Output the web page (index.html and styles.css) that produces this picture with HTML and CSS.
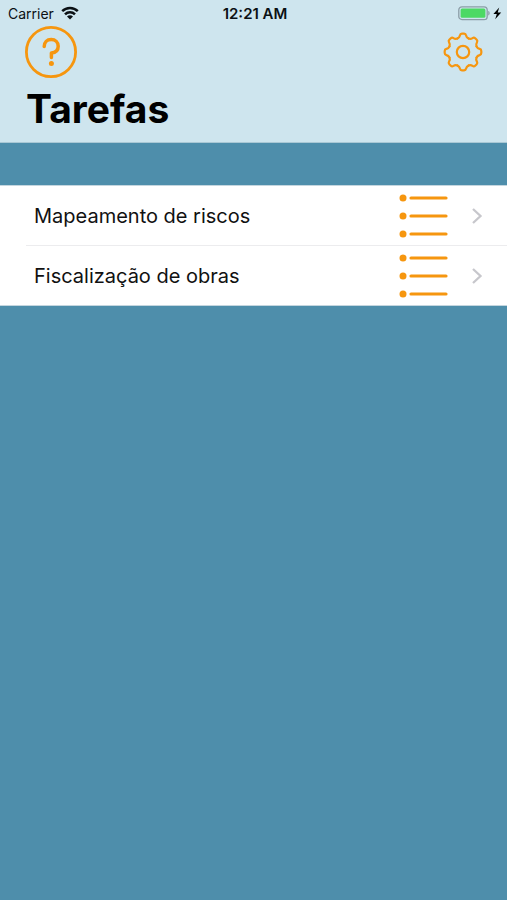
FILE: index.html
```html
<!DOCTYPE html>
<html lang="pt-BR">
<head>
<meta charset="utf-8">
<meta name="viewport" content="width=device-width, initial-scale=1">
<title>Tarefas</title>
<link rel="stylesheet" href="styles.css">
</head>
<body>
<header class="header">
  <div class="status">
    <div class="status-left">
      <span>Carrier</span>
      <svg width="18" height="14" viewBox="0 0 18 14" aria-hidden="true">
        <g fill="none" stroke="#0b1014" stroke-width="2.5">
          <path d="M1.2 5.2C5.6.8 12.4.8 16.8 5.2"/>
          <path d="M4 8.4C6.8 5.6 11.2 5.6 14 8.4"/>
        </g>
        <path d="M6 10.4C7.8 8.7 10.2 8.7 12 10.4L9 13.4Z" fill="#0b1014"/>
      </svg>
    </div>
    <span class="clock">12:21 AM</span>
    <div class="status-right">
      <svg width="44" height="16" viewBox="0 0 44 16" aria-hidden="true">
        <rect x=".8" y="1.8" width="28.4" height="12.8" rx="3.2" fill="none" stroke="#8b9da6" stroke-width="1.3"/>
        <rect x="2.6" y="3.6" width="24.8" height="9.2" rx="1.5" fill="#4cd964"/>
        <path d="M30.6 6.2q1.8 2 0 4z" fill="#8b9da6" stroke="#8b9da6" stroke-width=".6"/>
        <path d="M41.2 2.6L35.4 9h3.4l-1.6 5.2L43.2 7.4h-3.5z" fill="#000"/>
      </svg>
    </div>
  </div>
  <nav class="actions">
    <button class="icon-button" type="button" aria-label="Ajuda">
      <svg width="52" height="52" viewBox="0 0 52 52" fill="none" stroke="#f6960f" aria-hidden="true">
        <circle cx="26" cy="26" r="24.6" stroke-width="2.8"/>
        <path d="M19.2 20.6C19.2 16.2 22 13.6 26.2 13.6S33.2 16.4 33.2 20.2C33.2 24.6 30.4 26.6 26.4 27V31.6" stroke-width="3.5" stroke-linejoin="round" stroke-linecap="round"/>
        <circle cx="26.4" cy="37.4" r="2.5" fill="#f6960f" stroke="none"/>
      </svg>
    </button>
    <button class="icon-button" type="button" aria-label="Ajustes">
      <svg width="40" height="40" viewBox="-20 -20 40 40" fill="none" stroke="#f6960f" stroke-width="2.2" stroke-linecap="round" aria-hidden="true">
        <defs><path id="tooth" d="M-5.6-13.5C-3.9-14.2-3.4-15.2-3.1-16.6Q-2.7-18.3-1.1-18.3H1.1Q2.7-18.3 3.1-16.6C3.4-15.2 3.9-14.2 5.6-13.5"/></defs>
        <use href="#tooth"/>
        <use href="#tooth" transform="rotate(45)"/>
        <use href="#tooth" transform="rotate(90)"/>
        <use href="#tooth" transform="rotate(135)"/>
        <use href="#tooth" transform="rotate(180)"/>
        <use href="#tooth" transform="rotate(225)"/>
        <use href="#tooth" transform="rotate(270)"/>
        <use href="#tooth" transform="rotate(315)"/>
        <circle r="6.2"/>
      </svg>
    </button>
  </nav>
  <h1 class="title">Tarefas</h1>
</header>
<main>
  <ul class="tasks">
    <li class="task">
      <a class="task-link" href="#riscos">
        <span class="task-name">Mapeamento de riscos</span>
        <svg class="list-icon" width="50" height="46" viewBox="0 0 50 46" aria-hidden="true">
          <g fill="#f6960f"><circle cx="4" cy="5" r="3.5"/><circle cx="4" cy="23" r="3.5"/><circle cx="4" cy="41" r="3.5"/></g>
          <path d="M12 5H47M12 23H47M12 41H47" stroke="#f6960f" stroke-width="3.2" stroke-linecap="round"/>
        </svg>
        <svg width="12" height="18" viewBox="0 0 12 18" aria-hidden="true"><path d="M2 2L9.5 9L2 16" fill="none" stroke="#c7c7cc" stroke-width="2.3"/></svg>
      </a>
    </li>
    <li class="task">
      <a class="task-link" href="#obras">
        <span class="task-name">Fiscalização de obras</span>
        <svg class="list-icon" width="50" height="46" viewBox="0 0 50 46" aria-hidden="true">
          <g fill="#f6960f"><circle cx="4" cy="5" r="3.5"/><circle cx="4" cy="23" r="3.5"/><circle cx="4" cy="41" r="3.5"/></g>
          <path d="M12 5H47M12 23H47M12 41H47" stroke="#f6960f" stroke-width="3.2" stroke-linecap="round"/>
        </svg>
        <svg width="12" height="18" viewBox="0 0 12 18" aria-hidden="true"><path d="M2 2L9.5 9L2 16" fill="none" stroke="#c7c7cc" stroke-width="2.3"/></svg>
      </a>
    </li>
  </ul>
</main>
</body>
</html>
```
FILE: styles.css
```css
* {
  box-sizing: border-box;
}

body {
  margin: 0;
  min-height: 100vh;
  background: #4e8eab;
  color: #000;
  font-family: Inter, "Liberation Sans", sans-serif;
}

svg {
  display: block;
  flex: none;
}

.header {
  background: #cee5ee;
  border-bottom: 1px solid #a9c8d5;
  padding-bottom: 8px;
}

.status {
  display: grid;
  grid-template-columns: 1fr auto 1fr;
  align-items: center;
  height: 26px;
  padding: 0 5px 0 8px;
  font-size: 15px;
  color: #0b1014;
}

.status-left {
  display: flex;
  align-items: center;
  gap: 5px;
  font-size: 14px;
}

.status-left svg {
  margin-left: 2px;
}

.status-right {
  display: flex;
  justify-content: flex-end;
}

.clock {
  font-weight: 600;
}

.actions {
  display: flex;
  align-items: center;
  justify-content: space-between;
  padding: 0 24px 0 25px;
}

.icon-button {
  padding: 0;
  border: 0;
  background: none;
}

.title {
  margin: 6px 26px 0;
  font-size: 39px;
  line-height: 50px;
  font-weight: 700;
}

.tasks {
  margin: 42px 0 0;
  padding: 0;
  list-style: none;
  background: #fff;
  border-top: 1px solid #c4d6df;
  border-bottom: 1px solid #c4d6df;
}

.task-link {
  display: flex;
  align-items: center;
  height: 59px;
  margin-left: 26px;
  padding: 0 24px 0 8px;
  color: #111;
  text-decoration: none;
  font-size: 20px;
}

.task + .task .task-link {
  height: 60px;
  border-top: 1px solid #ececee;
}

.task-name {
  flex: 1;
}

.list-icon {
  margin-right: 22px;
}
```
